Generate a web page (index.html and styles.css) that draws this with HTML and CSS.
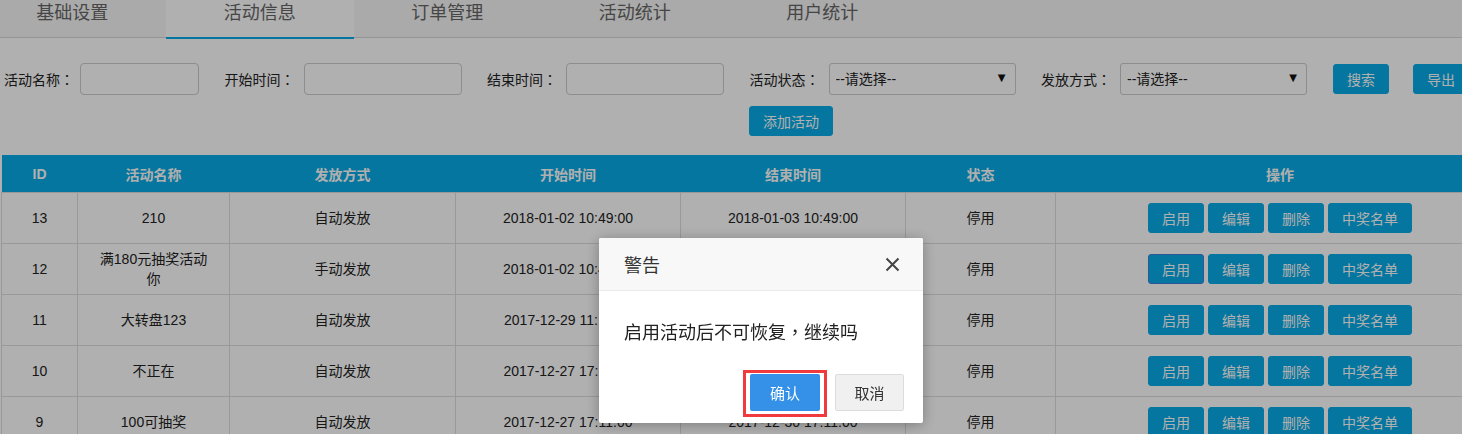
FILE: index.html
```html
<!DOCTYPE html>
<html lang="zh-CN">
<head>
<meta charset="utf-8">
<title>活动信息</title>
<link rel="stylesheet" href="styles.css">
</head>
<body>
<div class="page">
  <nav class="tabs">
    <a class="tab">基础设置</a>
    <a class="tab is-active">活动信息</a>
    <a class="tab">订单管理</a>
    <a class="tab">活动统计</a>
    <a class="tab">用户统计</a>
  </nav>

  <form class="filters">
    <div class="filter-row">
      <label class="field"><span class="field-label field-label--first">活动名称<span class="punct" lang="zh-TW">：</span></span><input class="input input--name" type="text"></label>
      <label class="field"><span class="field-label">开始时间<span class="punct" lang="zh-TW">：</span></span><input class="input input--date" type="text"></label>
      <label class="field"><span class="field-label">结束时间<span class="punct" lang="zh-TW">：</span></span><input class="input input--date" type="text"></label>
      <label class="field"><span class="field-label">活动状态<span class="punct" lang="zh-TW">：</span></span>
        <span class="select-wrap"><select class="select"><option>--请选择--</option></select><span class="select-arrow">▼</span></span>
      </label>
      <label class="field"><span class="field-label">发放方式<span class="punct" lang="zh-TW">：</span></span>
        <span class="select-wrap"><select class="select"><option>--请选择--</option></select><span class="select-arrow">▼</span></span>
      </label>
      <button type="button" class="btn btn-search">搜索</button>
      <button type="button" class="btn">导出</button>
    </div>
    <div class="filter-row2">
      <button type="button" class="btn">添加活动</button>
    </div>
  </form>

  <table class="grid">
    <colgroup>
      <col class="c-id"><col class="c-name"><col class="c-mode"><col class="c-time"><col class="c-time"><col class="c-status"><col>
    </colgroup>
    <thead>
      <tr><th>ID</th><th>活动名称</th><th>发放方式</th><th>开始时间</th><th>结束时间</th><th>状态</th><th>操作</th></tr>
    </thead>
    <tbody>
      <tr><td>13</td><td class="td-name">210</td><td>自动发放</td><td>2018-01-02 10:49:00</td><td>2018-01-03 10:49:00</td><td>停用</td>
        <td><div class="ops"><button class="btn">启用</button><button class="btn">编辑</button><button class="btn">删除</button><button class="btn">中奖名单</button></div></td></tr>
      <tr><td>12</td><td class="td-name">满180元抽奖活动你</td><td>手动发放</td><td>2018-01-02 10:49:00</td><td>2018-01-03 10:49:00</td><td>停用</td>
        <td><div class="ops"><button class="btn is-focus">启用</button><button class="btn">编辑</button><button class="btn">删除</button><button class="btn">中奖名单</button></div></td></tr>
      <tr><td>11</td><td class="td-name">大转盘123</td><td>自动发放</td><td>2017-12-29 11:11:00</td><td>2017-12-30 11:11:00</td><td>停用</td>
        <td><div class="ops"><button class="btn">启用</button><button class="btn">编辑</button><button class="btn">删除</button><button class="btn">中奖名单</button></div></td></tr>
      <tr><td>10</td><td class="td-name">不正在</td><td>自动发放</td><td>2017-12-27 17:11:00</td><td>2017-12-30 17:11:00</td><td>停用</td>
        <td><div class="ops"><button class="btn">启用</button><button class="btn">编辑</button><button class="btn">删除</button><button class="btn">中奖名单</button></div></td></tr>
      <tr><td>9</td><td class="td-name">100可抽奖</td><td>自动发放</td><td>2017-12-27 17:11:00</td><td>2017-12-30 17:11:00</td><td>停用</td>
        <td><div class="ops"><button class="btn">启用</button><button class="btn">编辑</button><button class="btn">删除</button><button class="btn">中奖名单</button></div></td></tr>
    </tbody>
  </table>
</div>

<div class="backdrop"></div>

<div class="modal" role="dialog">
  <div class="modal-header">
    <span class="modal-title">警告</span>
    <span class="modal-close">
      <svg width="15" height="15" viewBox="0 0 15 15"><path d="M1.5 1.5 L13.5 13.5 M13.5 1.5 L1.5 13.5" stroke="#444" stroke-width="2" fill="none"/></svg>
    </span>
  </div>
  <div class="modal-body">启用活动后不可恢复<span class="punct" lang="zh-TW">，</span>继续吗</div>
  <div class="modal-footer">
    <span class="highlight"><button class="mbtn mbtn-primary">确认</button></span>
    <button class="mbtn mbtn-default">取消</button>
  </div>
</div>
</body>
</html>
```

FILE: styles.css
```css
html, body {
  margin: 0;
  overflow: hidden;
}
body {
  width: 1462px;
  height: 434px;
  background: #fff;
  color: #333;
  font-family: "Liberation Sans", "Noto Sans CJK SC", sans-serif;
  font-size: 14px;
}
.page {
  width: 1505px;
}
.punct {
  font-family: "Noto Sans CJK TC", sans-serif;
}

/* tabs */
.tabs {
  display: flex;
  height: 37px;
  background: #f6f6f6;
  border-bottom: 1px solid #d8d8d8;
  margin-left: -21.5px;
}
.tab {
  flex: none;
  width: 187.5px;
  height: 37px;
  box-sizing: border-box;
  text-align: center;
  font-size: 18px;
  line-height: 27px;
  color: #666;
}
.tab.is-active {
  height: 39px;
  background: #fff;
  border-bottom: 2px solid #08abe6;
}

/* filters */
.filters {
  margin: 0;
  padding-top: 25px;
}
.filter-row {
  display: flex;
  align-items: center;
  padding-left: 4px;
  height: 32px;
}
.field {
  display: flex;
  align-items: center;
  margin-right: 25.5px;
}
.field-label {
  width: 79px;
  flex: none;
  color: #222;
}
.field-label--first {
  width: 76px;
}
.input {
  height: 32px;
  box-sizing: border-box;
  border: 1px solid #ccc;
  border-radius: 4px;
  background: #fff;
  padding: 0 6px;
  font: inherit;
}
.input--name { width: 119px; }
.input--date { width: 158px; }
.select-wrap {
  position: relative;
  display: block;
}
.select {
  -webkit-appearance: none;
  appearance: none;
  display: block;
  width: 187px;
  height: 32px;
  box-sizing: border-box;
  border: 1px solid #ccc;
  border-radius: 3px;
  background: #fff;
  color: #222;
  padding: 0 6px;
  font: 14px "Liberation Sans", "Noto Sans CJK SC", sans-serif;
}
.select-arrow {
  position: absolute;
  right: 10px;
  top: 9px;
  font-size: 10px;
  line-height: 12px;
  color: #111;
  pointer-events: none;
  font-family: "DejaVu Sans", sans-serif;
}
.btn {
  flex: none;
  height: 30px;
  padding: 0 13px;
  border: 1px solid #08abe6;
  border-radius: 3px;
  background: #08abe6;
  color: #fff;
  font: 14px "Liberation Sans", "Noto Sans CJK SC", sans-serif;
  cursor: pointer;
}
.btn-search {
  margin-left: 0.5px;
  margin-right: 24px;
}
.btn.is-focus {
  border-color: #3f7fd9;
}
.filter-row2 {
  margin-top: 11px;
  padding-left: 749px;
  height: 30px;
}

/* table */
.grid {
  margin-top: 19px;
  margin-left: 1px;
  width: 1504px;
  border-collapse: collapse;
  table-layout: fixed;
}
.c-id { width: 76px; }
.c-name { width: 152px; }
.c-mode { width: 226px; }
.c-time { width: 225px; }
.c-status { width: 150px; }
.grid th {
  height: 37px;
  padding: 0;
  background: #08abe6;
  color: #fff;
  font-weight: bold;
  text-align: center;
}
.grid td {
  height: 50px;
  padding: 0 10px;
  border: 1px solid #dedede;
  text-align: center;
  line-height: 20px;
  color: #222;
}
.grid td.td-name {
  padding: 0 18px;
}
.ops {
  display: flex;
  justify-content: center;
  gap: 4px;
}

/* modal */
.backdrop {
  position: fixed;
  inset: 0;
  background: rgba(0, 0, 0, 0.31);
}
.modal {
  position: fixed;
  left: 599px;
  top: 238px;
  width: 324px;
  height: 185px;
  background: #fff;
  border-radius: 2px;
  box-shadow: 0 2px 14px rgba(0, 0, 0, 0.3);
  overflow: hidden;
}
.modal-header {
  height: 53px;
  box-sizing: border-box;
  display: flex;
  align-items: center;
  justify-content: space-between;
  padding: 0 23px 0 25px;
  background: #f8f8f8;
  border-bottom: 1px solid #eaeaea;
}
.modal-title {
  font-size: 18px;
  color: #333;
}
.modal-close {
  display: flex;
  width: 15px;
  height: 15px;
}
.modal-body {
  padding: 28px 25px 0;
  font-size: 18px;
  line-height: 24px;
  color: #222;
}
.modal-footer {
  display: flex;
  justify-content: flex-end;
  align-items: flex-start;
  gap: 8px;
  margin-top: 25px;
  padding-right: 19px;
}
.highlight {
  display: flex;
  border: 3px solid #f03a3d;
  padding: 1px 4px 3px;
}
.mbtn {
  height: 37px;
  border-radius: 2px;
  font: 15px "Liberation Sans", "Noto Sans CJK SC", sans-serif;
  cursor: pointer;
}
.mbtn-primary {
  width: 70px;
  border: none;
  background: #3590e8;
  color: #fff;
}
.mbtn-default {
  width: 69px;
  margin-top: 4px;
  border: 1px solid #dcdcdc;
  background: #f0f0f0;
  color: #333;
}
```
